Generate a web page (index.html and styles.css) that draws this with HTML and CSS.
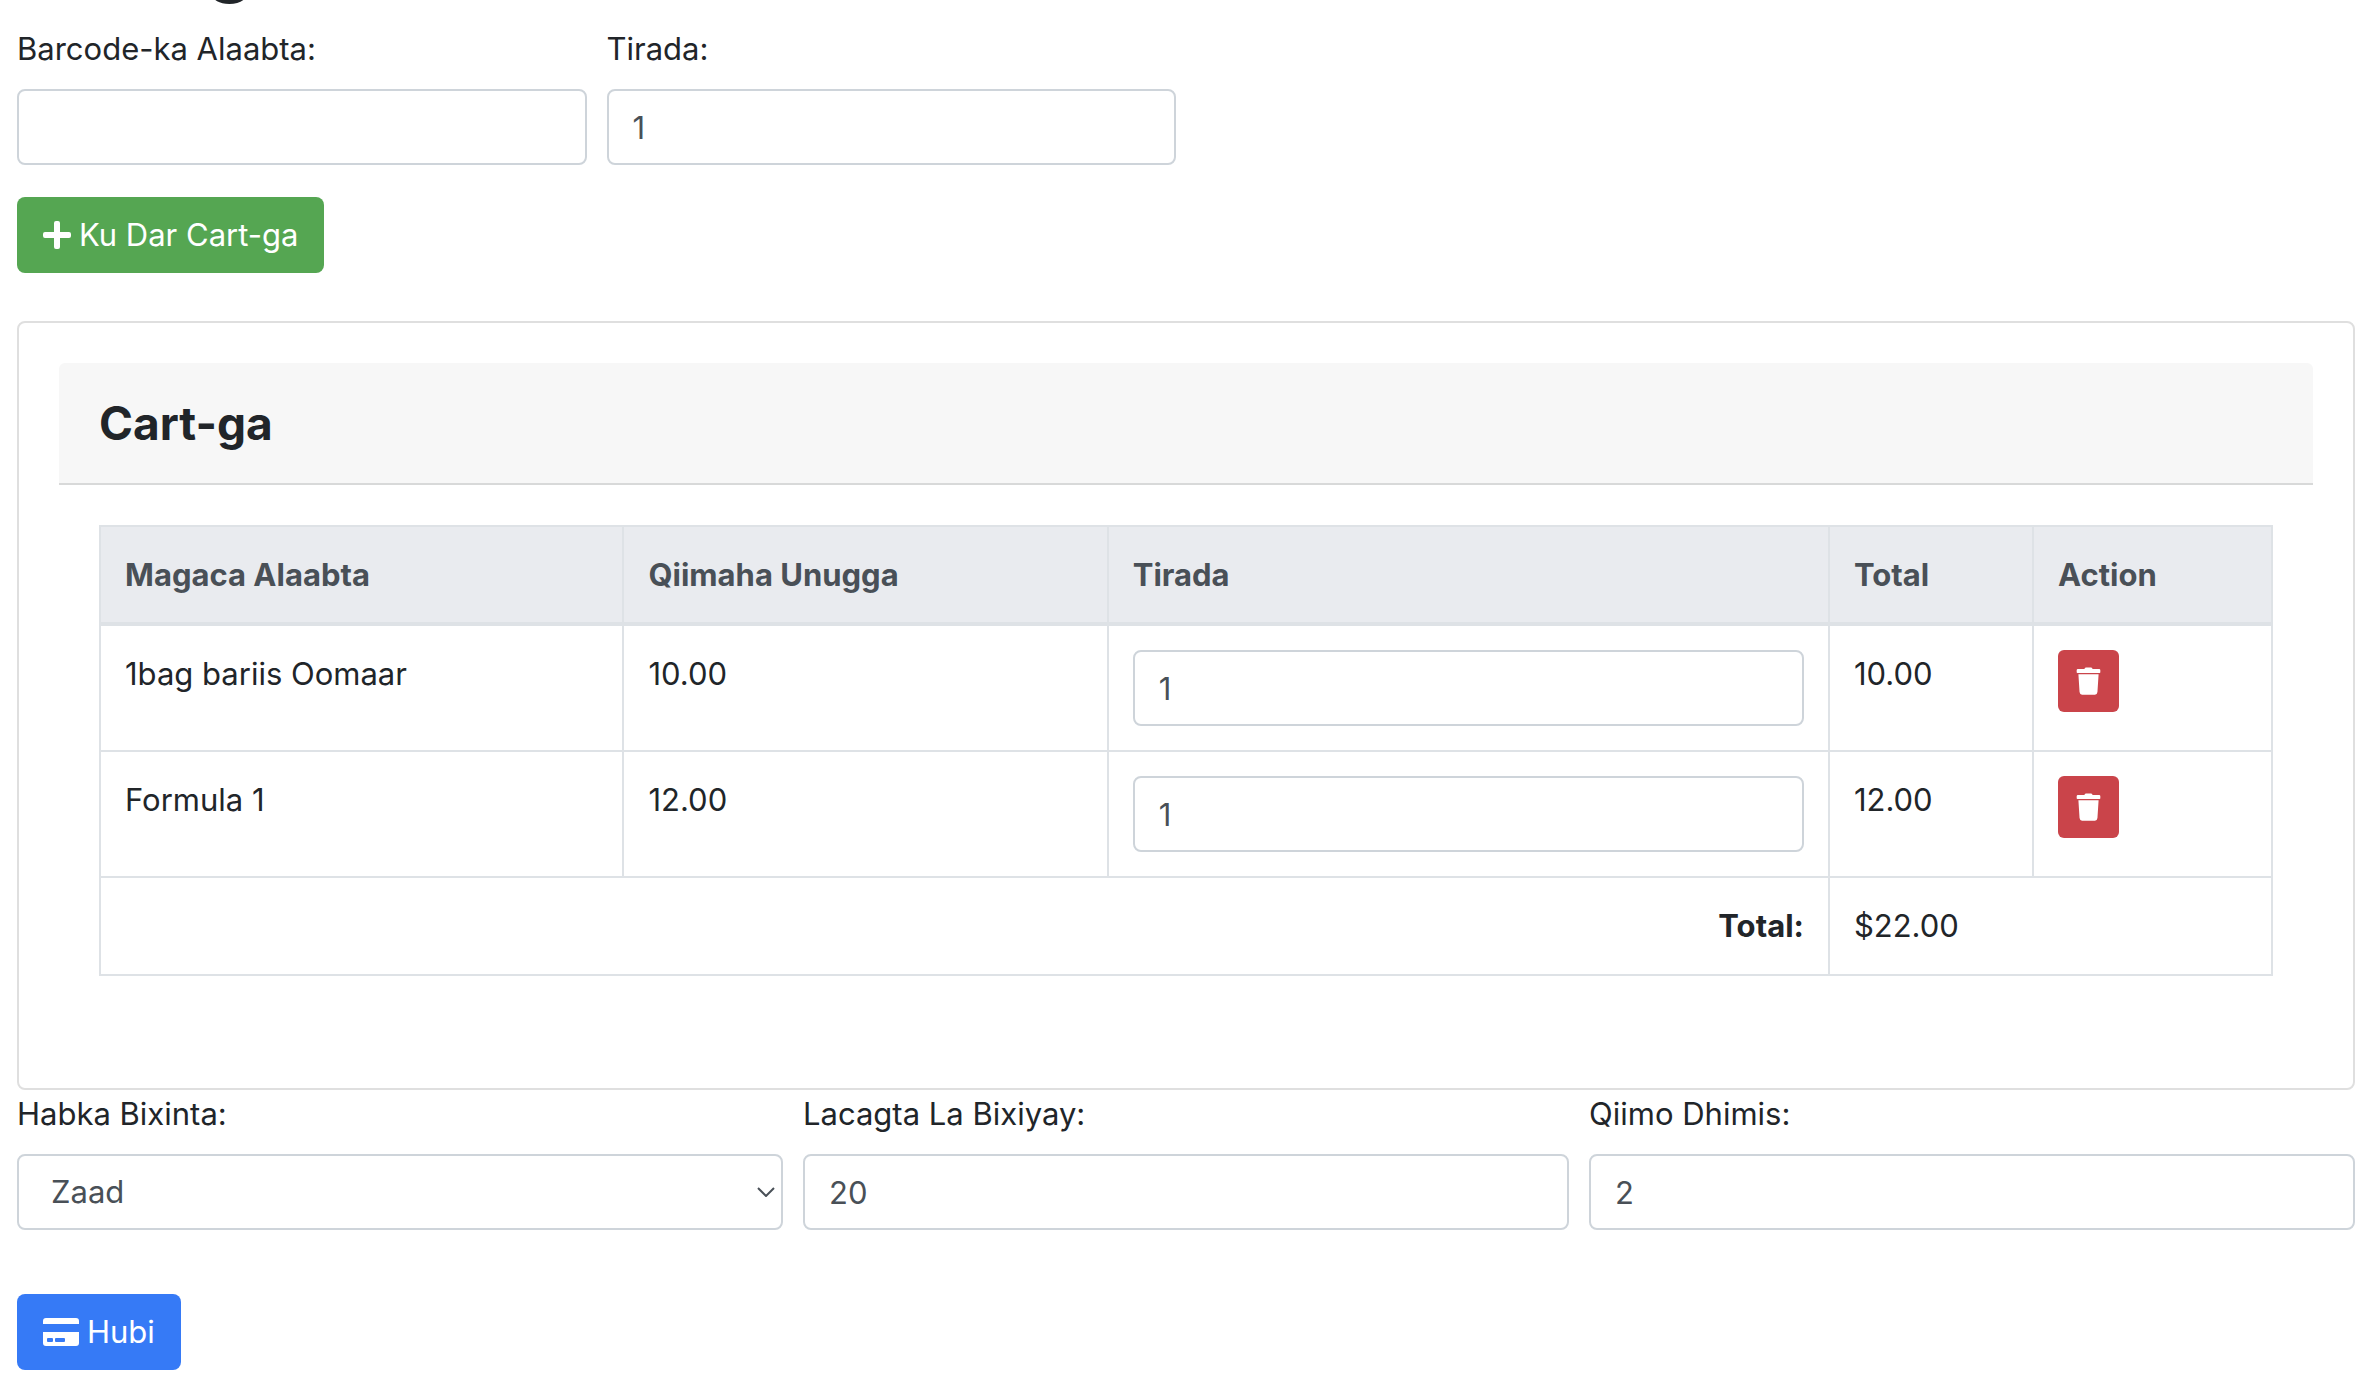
FILE: index.html
```html
<!DOCTYPE html>
<html lang="so">
<head>
<meta charset="utf-8">
<meta name="viewport" content="width=device-width, initial-scale=1">
<title>Cart-ga</title>
<link rel="stylesheet" href="styles.css">
</head>
<body>
<main class="page">
  <h1 class="page-title">Cart-ga</h1>

  <form class="add-form">
    <div class="row row-quarters">
      <div class="field">
        <label for="barcode">Barcode-ka Alaabta:</label>
        <input class="control" id="barcode" type="text">
      </div>
      <div class="field">
        <label for="quantity">Tirada:</label>
        <input class="control" id="quantity" type="text" inputmode="numeric" value="1">
      </div>
    </div>
    <button class="btn btn-success" type="button">
      <svg class="icon-plus" viewBox="0 0 28 28" aria-hidden="true"><path fill="currentColor" d="M11 2Q11 0 13 0H15Q17 0 17 2V11H26Q28 11 28 13V15Q28 17 26 17H17V26Q17 28 15 28H13Q11 28 11 26V17H2Q0 17 0 15V13Q0 11 2 11H11Z"/></svg>
      <span>Ku Dar Cart-ga</span>
    </button>
  </form>

  <section class="card">
    <header class="card-header"><h2 class="card-title">Cart-ga</h2></header>
    <div class="card-body">
      <table class="cart">
        <colgroup><col class="col-name"><col class="col-price"><col class="col-qty"><col class="col-total"><col class="col-action"></colgroup>
        <thead>
          <tr><th scope="col">Magaca Alaabta</th><th scope="col">Qiimaha Unugga</th><th scope="col">Tirada</th><th scope="col">Total</th><th scope="col">Action</th></tr>
        </thead>
        <tbody>
          <tr>
            <td>1bag bariis Oomaar</td><td>10.00</td>
            <td><input class="control" type="text" inputmode="numeric" value="1" aria-label="Tirada"></td>
            <td>10.00</td>
            <td><button class="btn btn-danger" type="button" aria-label="Delete"><svg class="icon-trash" viewBox="0 0 26 30" aria-hidden="true"><path fill="currentColor" d="M9 1.500Q9.300 .500 10.500 .500H15.500Q16.700 .500 17 1.500L17.300 2H24Q25.300 2 25.300 3.200V5.500Q25.300 6.200 24.500 6.200H1.500Q.700 6.200 .700 5.500V3.200Q.700 2 2 2H8.700ZM2.500 7.500H23.500L22.300 26Q22 28.700 19.700 28.700H6.300Q4 28.700 3.700 26Z"/></svg></button></td>
          </tr>
          <tr>
            <td>Formula 1</td><td>12.00</td>
            <td><input class="control" type="text" inputmode="numeric" value="1" aria-label="Tirada"></td>
            <td>12.00</td>
            <td><button class="btn btn-danger" type="button" aria-label="Delete"><svg class="icon-trash" viewBox="0 0 26 30" aria-hidden="true"><path fill="currentColor" d="M9 1.500Q9.300 .500 10.500 .500H15.500Q16.700 .500 17 1.500L17.300 2H24Q25.300 2 25.300 3.200V5.500Q25.300 6.200 24.500 6.200H1.500Q.700 6.200 .700 5.500V3.200Q.700 2 2 2H8.700ZM2.500 7.500H23.500L22.300 26Q22 28.700 19.700 28.700H6.300Q4 28.700 3.700 26Z"/></svg></button></td>
          </tr>
        </tbody>
        <tfoot>
          <tr><td class="sum-label" colspan="3">Total:</td><td colspan="2">$22.00</td></tr>
        </tfoot>
      </table>
    </div>
  </section>

  <form class="pay-form">
    <div class="row row-thirds">
      <div class="field">
        <label for="method">Habka Bixinta:</label>
        <div class="select-wrap">
          <select class="control" id="method"><option>Zaad</option></select>
          <svg class="icon-chevron" viewBox="0 0 18 10" aria-hidden="true"><path d="M1 1L9 9L17 1" fill="none" stroke="currentColor" stroke-width="2"/></svg>
        </div>
      </div>
      <div class="field">
        <label for="paid">Lacagta La Bixiyay:</label>
        <input class="control" id="paid" type="text" inputmode="decimal" value="20">
      </div>
      <div class="field">
        <label for="discount">Qiimo Dhimis:</label>
        <input class="control" id="discount" type="text" inputmode="decimal" value="2">
      </div>
    </div>
    <button class="btn btn-primary" type="button">
      <svg class="icon-card" viewBox="0 0 36 28" aria-hidden="true"><path fill="currentColor" fill-rule="evenodd" d="M3 0H33Q36 0 36 3V6H0V3Q0 0 3 0ZM0 14H36V25Q36 28 33 28H3Q0 28 0 25ZM5 20Q4 20 4 21V23Q4 24 5 24H9Q10 24 10 23V21Q10 20 9 20ZM13 20Q12 20 12 21V23Q12 24 13 24H21Q22 24 22 23V21Q22 20 21 20Z"/></svg>
      <span>Hubi</span>
    </button>
  </form>
</main>
</body>
</html>
```

FILE: styles.css
```css
*, *::before, *::after { box-sizing: border-box; }

body {
  margin: 0;
  background: #fff;
  color: #212529;
  font: 400 31px/48px Inter, "Liberation Sans", sans-serif;
  overflow-x: hidden;
}

/* The page title sits mostly above the top edge of the view. */
.page { margin-top: -87px; padding: 0 21px 2px 17px; }

.page-title { margin: 0 0 16px; font-size: 74px; font-weight: 700; line-height: 96px; }

.row { display: grid; column-gap: 20px; }
.row-quarters { grid-template-columns: repeat(4, 1fr); margin-bottom: 32px; }
.row-thirds { grid-template-columns: repeat(3, 1fr); margin-bottom: 64px; }

label { display: block; margin-bottom: 16px; }

.control {
  display: block;
  width: 100%;
  height: 76px;
  margin: 0;
  padding: 12px 24px;
  border: 2px solid #ced4da;
  border-radius: 8px;
  background: #fff;
  color: #495057;
  font: inherit;
}

select.control { appearance: none; padding-left: 32px; }
.select-wrap { position: relative; color: #495057; }
.icon-chevron { position: absolute; top: 33px; right: 8px; width: 18px; height: 10px; pointer-events: none; }

.btn {
  display: inline-flex;
  align-items: center;
  gap: 8px;
  height: 76px;
  padding: 0 26px;
  border: 0;
  border-radius: 8px;
  color: #fff;
  font: inherit;
  vertical-align: top;
}
.btn-success { background: #55a652; }
.btn-primary { background: #367af6; }
.btn-danger { height: 62px; padding: 0 18px; border-radius: 6px; background: #ca444a; }

.icon-plus { width: 28px; height: 28px; }
.icon-card { width: 36px; height: 28px; }
.icon-trash { width: 25px; height: 29px; }

.card {
  margin-top: 48px;
  padding: 40px;
  border: 2px solid #dfdfdf;
  border-radius: 8px;
}
.card-header {
  padding: 24px 40px;
  border-bottom: 2px solid #d8d9d9;
  border-radius: 6px 6px 0 0;
  background: #f7f7f7;
}
.card-title { margin: 0; font-size: 46px; font-weight: 700; line-height: 72px; }
.card-body { padding: 40px; }

.cart {
  width: 100%;
  margin-bottom: 32px;
  border-collapse: collapse;
  table-layout: fixed;
}
.cart th, .cart td { padding: 24px; border: 2px solid #dee2e6; text-align: left; vertical-align: top; }
.cart thead th { padding-bottom: 23px; border-bottom-width: 4px; background: #e9ebef; color: #495057; font-weight: 700; }
.cart .sum-label { text-align: right; font-weight: 700; }
.col-name { width: 24.1%; }
.col-price { width: 22.3%; }
.col-qty { width: 33.2%; }
.col-total { width: 9.4%; }
.col-action { width: 11%; }
```
